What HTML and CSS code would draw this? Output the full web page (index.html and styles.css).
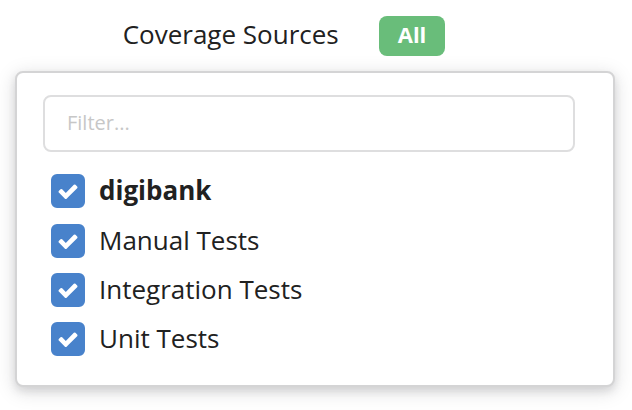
FILE: index.html
```html
<!DOCTYPE html>
<html lang="en">
<head>
    <meta charset="UTF-8">
    <title>Coverage Sources</title>
    <meta name="viewport" content="width=device-width, initial-scale=1.0">
    <link rel="stylesheet" href="styles.css">
</head>
<body>
    <svg class="sprite" aria-hidden="true">
        <symbol id="check" viewBox="0 0 1792 1792">
            <path d="M1671 596q0 40-28 68l-724 724-136 136q-28 28-68 28t-68-28l-136-136-362-362q-28-28-28-68t28-68l136-136q28-28 68-28t68 28l294 295 656-657q28-28 68-28t68 28l136 136q28 28 28 68z"/>
        </symbol>
    </svg>
    <div class="sources-header">
        <span class="sources-title">Coverage Sources</span>
        <button type="button" class="sources-btn">All</button>
    </div>
    <div class="sources-popup">
        <input type="text" class="filter-input" placeholder="Filter..." aria-label="Filter sources">
        <ul class="source-list">
            <li class="source-group">
                <label class="source">
                    <span class="checkbox">
                        <input type="checkbox" checked>
                        <svg><use href="#check"/></svg>
                    </span>
                    <span class="source-name">digibank</span>
                </label>
            </li>
            <li>
                <label class="source">
                    <span class="checkbox">
                        <input type="checkbox" checked>
                        <svg><use href="#check"/></svg>
                    </span>
                    <span class="source-name">Manual Tests</span>
                </label>
            </li>
            <li>
                <label class="source">
                    <span class="checkbox">
                        <input type="checkbox" checked>
                        <svg><use href="#check"/></svg>
                    </span>
                    <span class="source-name">Integration Tests</span>
                </label>
            </li>
            <li>
                <label class="source">
                    <span class="checkbox">
                        <input type="checkbox" checked>
                        <svg><use href="#check"/></svg>
                    </span>
                    <span class="source-name">Unit Tests</span>
                </label>
            </li>
        </ul>
    </div>
</body>
</html>
```
FILE: styles.css
```css
* {
    box-sizing: border-box;
}
body {
    margin: 0;
    padding: 16px 17px 23px 15px;
    background: #fff;
    color: #212121;
    font-family: 'Open Sans', Arial, sans-serif;
    font-size: 26px;
    line-height: 32px;
}
.sprite {
    display: none;
}
.sources-header {
    display: flex;
    justify-content: center;
    align-items: center;
    gap: 40px;
    padding-right: 62px;
    margin-bottom: 15px;
}
.sources-title {
    padding-bottom: 4px;
}
.sources-btn {
    height: 40px;
    padding: 0 19px 4px;
    border: none;
    border-radius: 8px;
    background: #69bd7a;
    color: #fff;
    font-family: inherit;
    font-size: 22px;
    font-weight: 700;
    cursor: pointer;
}
.sources-popup {
    padding: 22px 38px 29px 26px;
    border: 2px solid #d4d4d5;
    border-radius: 8px;
    background: #fff;
    box-shadow: 0 4px 8px rgba(34,36,38,0.12), 0 4px 20px rgba(34,36,38,0.15);
}
.filter-input {
    display: block;
    width: 100%;
    height: 57px;
    padding: 0 22px 2px;
    border: 2px solid #dededf;
    border-radius: 8px;
    background: #fff;
    color: inherit;
    font-family: inherit;
    font-size: 20px;
    outline: none;
}
.filter-input::placeholder {
    color: #c7c7c7;
    opacity: 1;
}
.filter-input:focus {
    border-color: #85b7d9;
}
.source-list {
    list-style: none;
    margin: 22px 0 0;
    padding: 0 8px;
    display: grid;
    gap: 15px;
}
.source-group {
    padding-bottom: 1px;
    font-weight: 700;
}
.source {
    display: flex;
    align-items: center;
    gap: 14px;
    cursor: pointer;
}
.source-name {
    padding-bottom: 2px;
}
/* box and tick share one grid cell */
.checkbox {
    display: grid;
    place-items: center;
}
.checkbox input,
.checkbox svg {
    grid-area: 1 / 1;
}
.checkbox input {
    appearance: none;
    width: 34px;
    height: 34px;
    margin: 0;
    border: 2px solid #4882cb;
    border-radius: 6px;
    background: #fff;
    cursor: pointer;
}
.checkbox input:checked {
    background: #4882cb;
}
.checkbox svg {
    width: 22px;
    height: 22px;
    fill: #fff;
    pointer-events: none;
}
```
